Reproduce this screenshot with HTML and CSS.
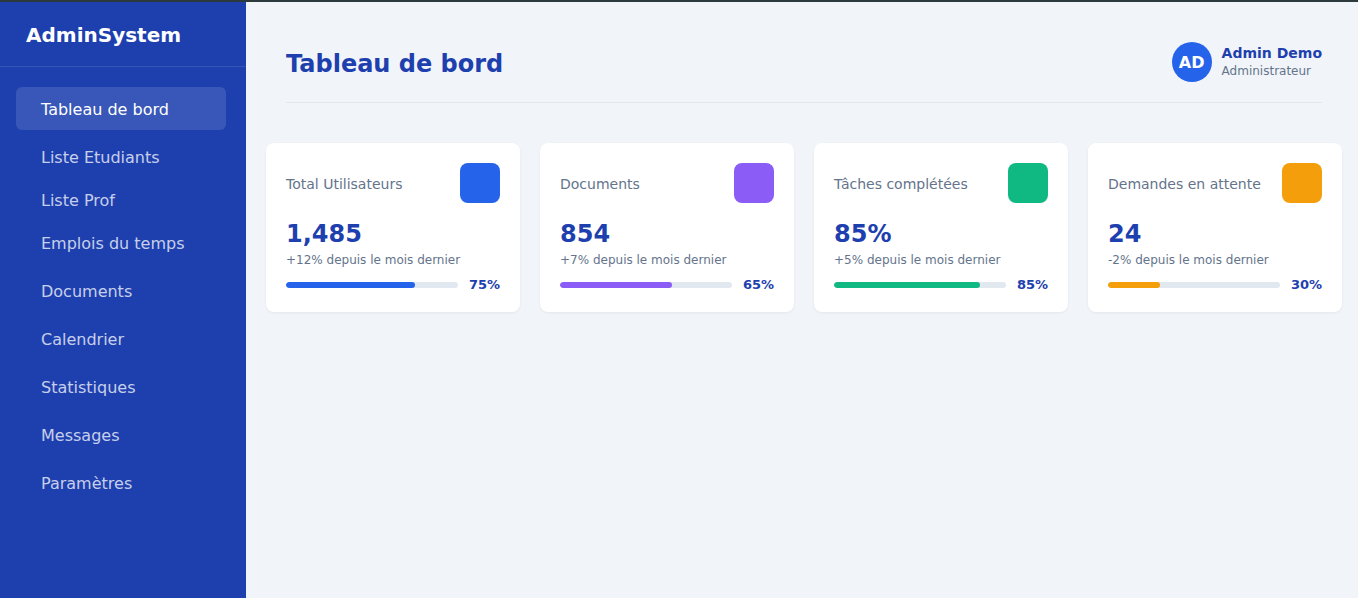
FILE: index.html
```html
<!DOCTYPE html>
<html lang="fr">
<head>
<meta charset="utf-8">
<title>AdminSystem</title>
<link rel="stylesheet" href="styles.css">
</head>
<body>
<div class="app">
  <aside class="sidebar">
    <div class="brand">AdminSystem</div>
    <nav class="nav">
      <a class="nav-item active">Tableau de bord</a>
      <a class="nav-item tight">Liste Etudiants</a>
      <a class="nav-item tight">Liste Prof</a>
      <a class="nav-item">Emplois du temps</a>
      <a class="nav-item">Documents</a>
      <a class="nav-item">Calendrier</a>
      <a class="nav-item">Statistiques</a>
      <a class="nav-item">Messages</a>
      <a class="nav-item">Paramètres</a>
    </nav>
  </aside>
  <main class="main">
    <header class="header">
      <h1 class="page-title">Tableau de bord</h1>
      <div class="user">
        <div class="avatar">AD</div>
        <div class="user-info">
          <div class="user-name">Admin Demo</div>
          <div class="user-role">Administrateur</div>
        </div>
      </div>
    </header>
    <section class="cards">
      <div class="card">
        <div class="card-top">
          <span class="card-title">Total Utilisateurs</span>
          <span class="card-icon blue"></span>
        </div>
        <div class="card-value">1,485</div>
        <div class="card-sub">+12% depuis le mois dernier</div>
        <div class="progress-row">
          <div class="track"><div class="fill blue" style="width:75%"></div></div>
          <span class="pct">75%</span>
        </div>
      </div>
      <div class="card">
        <div class="card-top">
          <span class="card-title">Documents</span>
          <span class="card-icon purple"></span>
        </div>
        <div class="card-value">854</div>
        <div class="card-sub">+7% depuis le mois dernier</div>
        <div class="progress-row">
          <div class="track"><div class="fill purple" style="width:65%"></div></div>
          <span class="pct">65%</span>
        </div>
      </div>
      <div class="card">
        <div class="card-top">
          <span class="card-title">Tâches complétées</span>
          <span class="card-icon green"></span>
        </div>
        <div class="card-value">85%</div>
        <div class="card-sub">+5% depuis le mois dernier</div>
        <div class="progress-row">
          <div class="track"><div class="fill green" style="width:85%"></div></div>
          <span class="pct">85%</span>
        </div>
      </div>
      <div class="card">
        <div class="card-top">
          <span class="card-title">Demandes en attente</span>
          <span class="card-icon orange"></span>
        </div>
        <div class="card-value">24</div>
        <div class="card-sub">-2% depuis le mois dernier</div>
        <div class="progress-row">
          <div class="track"><div class="fill orange" style="width:30%"></div></div>
          <span class="pct">30%</span>
        </div>
      </div>
    </section>
  </main>
</div>
</body>
</html>
```

FILE: styles.css
```css
* { box-sizing: border-box; }
html, body { margin: 0; padding: 0; height: 100%; }
body {
  font-family: "DejaVu Sans", sans-serif;
  background: #f1f5f9;
  border-top: 2px solid #2c3a3d;
  overflow: hidden;
}
.app {
  display: flex;
  height: 596px;
}
.sidebar {
  width: 246px;
  flex-shrink: 0;
  background: #1e40af;
  color: #fff;
}
.brand {
  padding: 21px 26px 19px;
  font-size: 20px;
  line-height: 24px;
  font-weight: bold;
  border-bottom: 1px solid rgba(255,255,255,0.1);
}
.nav {
  display: flex;
  flex-direction: column;
  padding: 20px 20px 20px 16px;
}
.nav-item {
  display: block;
  padding: 13px 25px 11px;
  font-size: 16px;
  line-height: 19px;
  color: rgba(255,255,255,0.76);
  border-radius: 6px;
  margin-bottom: 5px;
}
.nav-item.tight { margin-bottom: 0; }
.nav-item.active {
  background: rgba(255,255,255,0.12);
  color: #fff;
}
.main {
  flex: 1;
  padding: 20px 16px 20px 20px;
}
.header {
  margin: 0 20px 40px;
  padding: 20px 0;
  border-bottom: 1px solid #e2e8f0;
  display: flex;
  align-items: center;
  justify-content: space-between;
}
.page-title {
  margin: 0;
  padding-top: 3px;
  font-size: 24px;
  font-weight: bold;
  color: #1e40af;
}
.user {
  display: flex;
  align-items: center;
  gap: 10px;
}
.avatar {
  width: 40px;
  height: 40px;
  border-radius: 50%;
  background: #2563eb;
  color: #fff;
  font-weight: bold;
  font-size: 16px;
  display: flex;
  align-items: center;
  justify-content: center;
}
.user-name {
  font-size: 14px;
  font-weight: bold;
  color: #1e40af;
  line-height: 18px;
}
.user-role {
  font-size: 12px;
  color: #64748b;
  line-height: 19px;
}
.cards {
  display: grid;
  grid-template-columns: repeat(4, 1fr);
  gap: 20px;
}
.card {
  background: #fff;
  border-radius: 8px;
  padding: 20px;
  box-shadow: 0 1px 3px rgba(0,0,0,0.06);
}
.card-top {
  display: flex;
  align-items: center;
  justify-content: space-between;
}
.card-title {
  font-size: 14px;
  color: #64748b;
  padding-top: 2px;
}
.card-icon {
  width: 40px;
  height: 40px;
  border-radius: 8px;
}
.blue { background: #2563eb; }
.purple { background: #8b5cf6; }
.green { background: #10b981; }
.orange { background: #f59e0b; }
.card-value {
  margin-top: 16px;
  font-size: 24px;
  line-height: 30px;
  font-weight: bold;
  color: #1e40af;
}
.card-sub {
  margin-top: 4px;
  font-size: 12px;
  line-height: 14px;
  color: #64748b;
}
.progress-row {
  margin-top: 10px;
  display: flex;
  align-items: center;
  gap: 10px;
}
.track {
  flex: 1;
  height: 6px;
  border-radius: 3px;
  background: #e2e8f0;
  overflow: hidden;
}
.fill {
  height: 100%;
  border-radius: 3px;
}
.pct {
  min-width: 32px;
  text-align: right;
  font-size: 13px;
  line-height: 15px;
  font-weight: bold;
  color: #1e40af;
}
```
